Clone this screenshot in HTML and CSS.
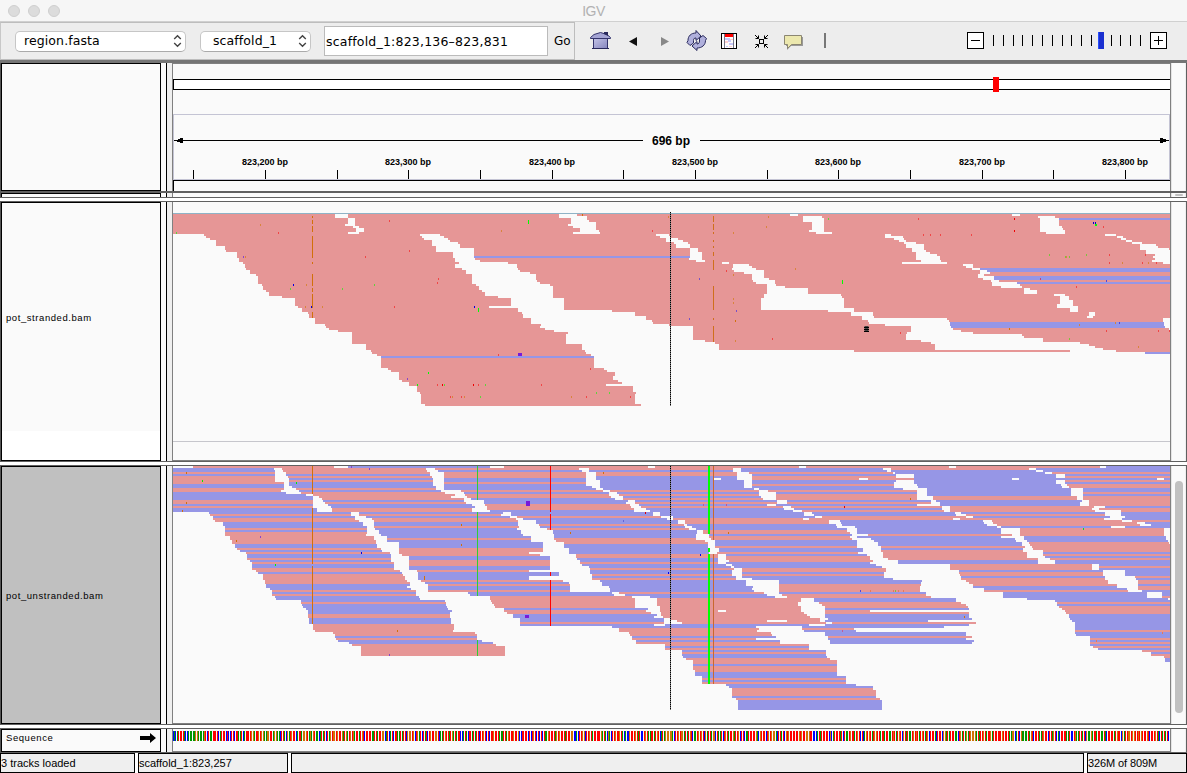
FILE: index.html
```html
<!DOCTYPE html>
<html lang="en">
<head>
<meta charset="utf-8">
<title>IGV</title>
<link rel="stylesheet" href="styles.css">
</head>
<body>
<div class="window">
  <header class="titlebar">
    <div class="lights"><i></i><i></i><i></i></div>
    <span class="title">IGV</span>
  </header>

  <div class="toolbar">
    <div class="locus-group">
      <div class="combo genome"><span>region.fasta</span>
        <svg width="9" height="14" viewBox="0 0 9 14"><path d="M1.2 5 4.5 1.7 7.8 5M1.2 9 4.5 12.3 7.8 9" fill="none" stroke="#444" stroke-width="1.4"/></svg></div>
      <div class="combo chrom"><span>scaffold_1</span>
        <svg width="9" height="14" viewBox="0 0 9 14"><path d="M1.2 5 4.5 1.7 7.8 5M1.2 9 4.5 12.3 7.8 9" fill="none" stroke="#444" stroke-width="1.4"/></svg></div>
      <div class="locus">scaffold_1:823,136–823,831</div>
      <span class="go">Go</span>
    </div>
    <svg class="tools" width="250" height="38" viewBox="575 22 250 38">
      <defs>
        <linearGradient id="lav" x1="0" y1="0" x2="1" y2="1"><stop offset="0" stop-color="#c4c4e8"/><stop offset="1" stop-color="#8585bd"/></linearGradient>
      </defs>
      <path d="M593.5 38.5h14v10h-14z" fill="url(#lav)" stroke="#33336b"/>
      <path d="M592 48.500h17" stroke="#29295c"/>
      <path d="M590.500 37.500 594 34.500 600.500 32.500 607 34.500 610.500 37.500v1h-20z" fill="#a4a4d4" stroke="#33336b"/>
      <path d="M604 32h4v4l-4-2z" fill="#29295c"/>
      <path d="M629 41.500l8-4.500v9z" fill="#111"/>
      <path d="M669 41.500l-8-4.500v9z" fill="#888"/>
      <g fill="#b0b0dc" stroke="#29295c" stroke-width="1" stroke-linejoin="round">
        <path d="M687 42.500 690 45.500 693.500 43v-2.500c0-2 1-2.500 2.500-2.500v2.500L701 36l-5-5.500v2.500c-5 0-8 3-8 7.500z"/>
        <path d="M706.500 38.500 703 35.500 699.500 38v3c0 2-1 3-2.500 3v-2.500L692 46l5 4.500V48c5 0 8.500-3 8.500-7.500z"/>
      </g>
      <rect x="721.500" y="33.500" width="15" height="15" fill="#fff" stroke="#000"/>
      <path d="M724.500 34v14M733.500 34v14" stroke="#778"/>
      <path d="M725 34h8v3h-8z" fill="#f00"/>
      <path d="M725 38h5v2h-5zM729 43h4v2h-4zM726 46h2v1h-2zM728 40h3v2h-3z" fill="#c9c9fa"/>
      <path d="M730 39h3v1h-3zM725 41h3v2h-3zM729 46h3v1h-3z" fill="#ffd0d0"/>
      <g fill="none" stroke="#000">
        <rect x="759.500" y="39.500" width="4" height="4"/>
        <path d="M755 35l3.500 3.500M755.500 38.500h3v-3M768 35l-3.500 3.500M764.500 35.500v3h3M755 48l3.500-3.500M758.500 47.500v-3h-3M768 48l-3.500-3.500M764.500 47.500v-3h3"/>
      </g>
      <path d="M786 37h17v9h-12l-4 4v-4h-1z" fill="#999"/>
      <path d="M784.500 35.500h17v9h-10l-4 4v-4h-3z" fill="#ece8ae" stroke="#8b8672"/>
      <path d="M825 33v15" stroke="#777" stroke-width="2"/>
    </svg>
    <svg class="zoomer" width="220" height="38" viewBox="960 22 220 38" shape-rendering="crispEdges">
      <rect x="967.500" y="32.500" width="16" height="16" fill="#fff" stroke="#000"/>
      <path d="M971 40.500h9" stroke="#000"/>
      <g id="zoom-ticks"></g>
      <rect x="1098" y="32" width="6" height="17" fill="#1a2fd0"/><path d="M1098.500 32v17" stroke="#2a50ff"/>
      <rect x="1150.500" y="32.500" width="16" height="16" fill="#fff" stroke="#000"/>
      <path d="M1154 40.500h9M1158.500 36v9" stroke="#000"/>
    </svg>
  </div>

  <section class="row header-row">
    <div class="name"></div><div class="split"></div>
    <div class="data">
      <svg width="997" height="127" viewBox="173 64 997 127">
        <g shape-rendering="crispEdges">
          <rect x="173.500" y="79.500" width="1000" height="10" fill="#fff" stroke="#000"/>
          <rect x="993" y="77" width="6" height="15" fill="#f00"/>
          <path d="M173.500 180v-65.500h996V179.500h-996" fill="none" stroke="#c4c4d4"/>
          <path d="M174 140.500h469M700 140.500h469M173.500 191v-10.500h998" fill="none" stroke="#000"/>
          <path d="M176 140h2v-1h2v-1h3v5h-3v-1h-3v-1h-1zM1168 140h-2v-1h-3v-1h-3v5h3v-1h3v-1h2z"/>
          <path id="ruler-ticks" stroke="#000"/>
        </g>
        <text class="span" x="671" y="145" text-anchor="middle">696 bp</text>
        <g id="ruler-labels" class="ruler" text-anchor="middle"></g>
      </svg>
    </div>
    <div class="scroll"></div>
  </section>
  <section class="row thin-row">
    <div class="name"></div><div class="split"></div><div class="data"></div>
    <div class="scroll"><b class="nub"></b></div>
  </section>
  <section class="row track-row">
    <div class="name stranded"><span>pot_stranded.bam</span></div><div class="split"></div>
    <div class="data">
      <svg id="stranded" width="997" height="258" viewBox="9 -9 2991 774" shape-rendering="crispEdges"></svg>
    </div>
    <div class="scroll"></div>
  </section>
  <section class="row track-row">
    <div class="name unstranded"><span>pot_unstranded.bam</span></div><div class="split"></div>
    <div class="data">
      <svg id="unstranded" width="997" height="258" viewBox="9 18 2991 774" shape-rendering="crispEdges"></svg>
    </div>
    <div class="scroll"><b class="thumb"></b></div>
  </section>
  <section class="row seq-row">
    <div class="name"><span>Sequence</span>
      <svg width="16" height="10" viewBox="0 0 16 10"><path d="M0 3h10V0l6 5-6 5V7H0z"/></svg></div>
    <div class="split"></div>
    <div class="data"><svg id="sequence" width="997" height="23" viewBox="0 0 997 23" shape-rendering="crispEdges"></svg></div>
    <div class="scroll"></div>
  </section>

  <footer class="status">
    <div class="tracks">3 tracks loaded</div>
    <div class="position">scaffold_1:823,257</div>
    <div class="message"></div>
    <div class="memory">326M of 809M</div>
  </footer>
</div>
<script src="plot.js"></script>
</body>
</html>
```
FILE: styles.css
```css
* { box-sizing: border-box; }
body { margin: 0; background: #fff; color: #000; font-family: "Liberation Sans", Arial, sans-serif; }
svg { display: block; flex: none; }
.window { width: 1187px; height: 773px; display: flex; flex-direction: column; overflow: hidden; }

.titlebar { height: 22px; flex: none; display: grid; grid-template-columns: 1fr auto 1fr; align-items: center; background: #f6f6f6; border-bottom: 1px solid #d0d0d0; }
.lights { display: flex; gap: 8px; padding-left: 8px; }
.lights i { width: 12px; height: 12px; border-radius: 50%; background: #dcdcdc; border: 1px solid #cfcfcf; }
.title { font-size: 14px; letter-spacing: -.5px; color: #b2b2b2; padding-top: 1px; }

.toolbar { height: 41px; flex: none; display: flex; background: #ededed; border-bottom: 3px solid #757575; }
.locus-group { width: 575px; height: 38px; display: flex; align-items: center; border: 1px solid #bdbdbd; border-left-color: #c8c8c8; padding-left: 14px; font: 12.500px "DejaVu Sans", sans-serif; }
.combo { height: 21px; display: flex; align-items: center; justify-content: space-between; background: #fff; border: 1px solid #c6c6c6; border-bottom-color: #aaa; border-radius: 5px; padding-right: 3px; }
.combo span { line-height: 19px; padding-bottom: 1px; letter-spacing: .1px; }
.genome { width: 171px; padding-left: 8px; }
.chrom { width: 111px; margin-left: 14px; padding-left: 12px; }
.locus { width: 224px; height: 30px; margin-left: 13px; background: #fff; border: 1px solid #bbb; padding-left: 1px; line-height: 29px; font-size: 12.500px; letter-spacing: .2px; white-space: nowrap; }
.go { margin-left: 6px; font-size: 12px; }
.tools { overflow: visible; }
.zoomer { margin-left: 135px; }

.row { flex: none; display: grid; grid-template-columns: 160px 11px 999px 15px; border-left: 1px solid #555; border-right: 1px solid #606060; background: #fafafa; }
.name { border: 1px solid #000; display: flex; align-items: center; font-size: 9.500px; letter-spacing: .57px; overflow: hidden; background: #fafafa; }
.name span { padding-left: 4px; }
.split { background: linear-gradient(to right, #fafafa 5px, #000 5px 6px, #efefef 6px); }
.data { border-left: 1px solid #808080; border-right: 1px solid #808080; overflow: hidden; background: #fafafa; }
.scroll { background: #fafafa; border-left: 1px solid #e4e4e4; border-right: 1px solid #eee; display: flex; justify-content: center; overflow: hidden; }
.header-row { height: 128px; }
.header-row .data { border-top: 1px solid #808080; }
.thin-row { height: 7px; border-top: 2px solid #606060; border-bottom: 1px solid #606060; }
.thin-row .name { border-bottom: 0; }
.nub { width: 8px; height: 2px; margin-top: 1px; background: #c0c0c0; border-radius: 1px; }
.track-row { height: 261px; margin-top: 3px; border-top: 1px solid #606060; border-bottom: 1px solid #606060; }
.track-row + .track-row { height: 260px; }
.track-row .data { border-bottom: 1px solid #808080; }
.stranded { background: linear-gradient(#fafafa 228px, #fff 228px); }
.stranded span { padding-bottom: 28px; }
.unstranded { background: #c0c0c0; }
.thumb { width: 8px; height: 232px; margin-top: 15px; border-radius: 4px; background: #c1c1c1; }
.seq-row { height: 25px; margin-top: 3px; border-top: 1px solid #606060; border-bottom: 1px solid #606060; }
.seq-row .name { justify-content: space-between; padding: 0 4px 6px 0; }
.seq-row .data { border-bottom: 1px solid #808080; }

.ruler { font-size: 9px; font-weight: bold; }
.span { font-size: 12px; font-weight: bold; }

.status { flex: 1; display: flex; gap: 3px; background: #fff; font-size: 11px; }
.status div { background: #efefef; border: 1px solid #000; line-height: 18px; white-space: nowrap; }
.tracks { width: 135px; border-left-color: #444; }
.position { width: 150px; }
.message { width: 793px; }
.memory { width: 100px; letter-spacing: -.1px; }
```
FILE: plot.js
```javascript
// Both alignment panels are drawn in units of a third of a pixel.
// Coordinate strings hold values relative to one of three windows, a, b and c.
const ORIGIN = { a: 0, b: 990, c: 2010 };
const RED = '#e69696', BLUE = '#9696e6', BLANK = '#fafafa';
const rect = (x, y, w, h, fill) => `<rect x="${x}" y="${y}" width="${w}" height="${h}" fill="${fill}"/>`;

// "y x1 x2 ... yEnd": stacked blank runs, each lasting until the next y.
function gaps(win, text) {
  const n = text.split(/[ ,;]+/).filter(Boolean).map(Number), o = ORIGIN[win];
  let out = '';
  for (let i = 0; i + 3 < n.length; i += 3)
    out += rect(n[i + 1] + o, n[i], n[i + 2] - n[i + 1], n[i + 3] - n[i], BLANK);
  return out;
}
// "x y ...": single base mismatches.
function marks(win, fill, text, w = 3, h = 6) {
  const n = text.split(/[ ,]+/).map(Number);
  let out = '';
  for (let i = 0; i < n.length; i += 2) out += rect(n[i] + ORIGIN[win], n[i + 1], w, h, fill);
  return out;
}
const column = (win, x, w, fill, spans) => spans.map(([p, q]) => rect(x + ORIGIN[win], p, w, q - p, fill)).join('');
function centre(top, bottom) {
  let out = '';
  for (let y = top; y < bottom; y += 6) out += rect(1500, y, 3, 3, '#000') + rect(1500, y + 3, 3, 3, '#777');
  return out;
}
// "y x y x ..." with a/b/c switching window.
function edge(text) {
  let o = 0; const pts = []; let y = null;
  for (const t of text.split(/[ ,]+/)) {
    if (ORIGIN[t] !== undefined) o = ORIGIN[t];
    else if (y === null) y = +t;
    else { pts.push([y, +t + o]); y = null; }
  }
  return y0 => { let x = pts[0][1]; for (const p of pts) { if (p[0] <= y0) x = p[1]; else break; } return x; };
}
function stack(left, right, colours) {
  const l = edge(left), r = edge(right);
  let y = 24, out = '';
  for (const m of colours.matchAll(/([RB])(\d+)/g))
    for (let i = 0; i < +m[2]; i++, y += 6)
      if (r(y) > l(y)) out += rect(l(y), y, r(y) - l(y), 6, m[1] === 'R' ? RED : BLUE);
  return out;
}

// pot_stranded.bam
const lowerLeft = '87 102 93 108 99 120 105 138 123 165 135 168 141 201 159 207 171 219 177 225 189 228 195 240 207 258 213 264 237 276 243 279 255 288 261 297 273 336 279 375 303 384 309 396 321 414 327 417 339 435 357 465 363 468 369 477 375 504 381 546 417 588 435 603 441 606 447 621 453 633 489 654 495 663 501 687 525 696 531 717 543 741 561 750 567 753 597 765 603';
const steps = lowerLeft.split(' ').map(Number);
let a = rect(9, 24, 2991, 3, '#8fb3c6') + rect(9, 27, 2991, 576, RED);
for (let i = 0; i + 2 < steps.length; i += 2) a += rect(9, steps[i], steps[i + 1] - 9, steps[i + 2] - steps[i], BLANK);
a += gaps('a', '27 495 534;39 534 555;57 525 555;63 549 567;69 558 582;81 534 567;87');
a += gaps('a', '87 750 810;93 756 822;99 762 834;105 786 840;111 786 864;117 786 870;123 798 870;129 798 912;141 849 912;159 855 915;165 855 930;171 867 1014;177 855 1041;189 876 1044;195 888 1050;201 888 1080;207 906 1098;225 906 1101;231 906 1110;237 918 1140;243 927 1149;255 936 1149;261 945 1149;273 984 1149;279 1023 1182;303 957 1182;309');
a += gaps('b', '309 54 192;315 54 336;321 66 405;327 69 405;333 69 438;339 93 438;345 93 456;351 93 459;357 123 507;363 120 579;369 135 579;375 162 579;381 204 579;387 198 579;405 198 615;411 198 645;417 246 657;435 255 1062;441 258 2010;447 273 2010;453 282 2010;489 312 2010;495 321 2010;501 345 2010;513 339 2010;525 354 2010;531 366 2010;537 318 2010;543 399 2010;561 408 2010;567 405 2010;597 423 2010;603');
a += gaps('b', '27 177 231;33 177 261;39 213 261;45 213 267;51 213 288;57 204 288;63 219 288;69 240 288;75 240 297;81 219 300;87');
a += gaps('b', '87 468 507;93 480 510;99 498 534;105 498 549;111 522 564;117 528 570;129 570 594;141 570 606;159 567 606;165 588 615;171 666 687;177 699 747;183 699 756;189 696 768;195 702 792;201 732 792;207 756 792;219 756 807;225 759 825;231 768 825;237 801 828;243 801 855;249 801 924;267 792 1023;273 792 1026;279 783 1032;309 783 1062;315 984 1062;321');
a += gaps('b', '27 870 894;33 909 966;39 909 972;51 936 972;75 927 972;81 948 996;87');
a += gaps('c', '321 33 99;333 66 102;339 66 321;345 84 327;351 87 330;357 135 333;363 213 333;369 213 339;375 213 363;381 201 399;387 198 546;393 198 552;399 198 609;405 243 609;411 273 720;417 285 747;423 285 765;429 285 789;435 690 828;441');
a += gaps('c', '27 516 540;33 594 645;39 600 657;63 600 666;69 600 669;75 600 675;81 618 675;87 135 153;93 135 189;99 162 192;105 177 198;111 192 228;117 198 252;129 216 252;135 216 258;141 228 270;147 228 291;153 228 300;165 243 303;171 186 321;177 369 399;183 378 399;189 396 420;195 420 450;207 414 432;213 414 462;219 429 462;225 453 477;231 456 531;237 456 540;243 483 546;249 552 570;255 552 591;267 642 675;273 660 687;285 660 699;297 651 699;303 651 714;309 690 714;321 747 765;333 741 759;339');
a += gaps('c', '87 795 828;93 831 849;99 843 858;105 858 876;111 876 906;117 900 948;123 900 954;129 900 987;135 918 990;147 945 990;153 939 990;159 945 990;165 936 990;171 969 990;177');
a += gaps('c', '339 969 990;351 972 990;363 975 990;369 987 990;375');
a += rect(912, 153, 648, 6, BLUE) + rect(633, 453, 639, 6, BLUE);
for (const [x, y, w, h] of [[657, 39, 333, 6], [420, 189, 570, 6], [441, 195, 549, 6], [462, 213, 528, 12], [531, 231, 459, 6], [330, 351, 642, 12], [333, 363, 642, 6], [915, 441, 75, 6]]) a += rect(x + 2010, y, w, h, BLUE);
a += column('a', 426, 3, '#d1700a', [[33, 39], [45, 57], [63, 81], [93, 159], [171, 177], [207, 243], [249, 261], [267, 309], [321, 339]]);
a += column('b', 639, 3, '#cf6f1c', [[33, 51], [57, 75], [81, 87], [105, 111], [123, 129], [141, 153], [165, 195], [243, 315], [339, 345], [363, 411]]);
a += marks('a', '#d8843c', '270 57 225 153 408 237 456 303 993 75 846 573 882 573 405 303');
a += marks('a', '#f04646', '324 81 657 45 717 135 585 153 804 219 801 231 672 303 984 447 801 537 924 537 840 573 873 573');
a += marks('a', '#e00', '816 537 909 537') + marks('a', '#00d', '369 237 423 303 912 303') + marks('a', '#8a46c8', '219 153 711 519');
a += marks('a', '#5fd23c', '18 81 360 249 516 249 612 237 822 537 945 537 930 573') + marks('a', '#0f0', '774 501 741 537') + marks('a', '#0f0', '924 309', 3, 12);
a += marks('b', '#d8843c', '3 75 504 33 699 81 804 33 798 63 699 207 885 189 699 279 699 291 705 405 213 573') + marks('b', '#d1700a', '246 27 705 345');
a += marks('b', '#f04646', '456 75 678 195 816 399 270 489 123 537 258 573 390 573') + marks('b', '#7850c8', '597 219 708 315 567 339');
a += marks('b', '#5fd23c', '984 39 288 561 327 561') + marks('b', '#0f0', '84 45 1026 225', 3, 12) + marks('b', '#7a1ad8', '54 444', 12, 9);
a += marks('c', '#f04646', '234 39 249 87 270 87 300 87 393 87 789 63 807 147 807 171 915 147 906 171 948 171 708 243 180 381 798 375 954 375 987 375') + marks('c', '#e00', '522 39 522 75');
a += marks('c', '#7cc23c', '627 147 675 153 687 153 738 147 687 399') + marks('c', '#d8843c', '678 153 846 171 924 171 825 351 894 423 717 357') + marks('c', '#d1700a', '507 369');
a += marks('c', '#00c', '759 51 765 51') + marks('c', '#0f0', '765 57', 6) + marks('c', '#5046dc', '798 225 837 351') + marks('c', '#c04678', '600 219');
a += rect(2082, 363, 15, 18, '#966') + rect(2085, 363, 9, 18, '#444') + rect(2082, 366, 15, 3, '#000') + rect(2082, 372, 15, 3, '#000') + rect(2082, 378, 15, 3, '#000');
a += rect(9, 708, 2991, 3, '#c6c6cc') + centre(21, 603);
document.getElementById('stranded').innerHTML = a;

// pot_unstranded.bam
let u = '';
for (const [p, q, c] of [[69, 492, RED], [534, 960, BLUE], [1002, 1434, RED], [1455, 1887, RED], [1908, 2337, RED], [2358, 2790, RED], [2808, 3000, BLUE]]) u += rect(p, 18, q - p, 6, c);
u += stack('24 9 156 117 162 120 168 129 180 135 186 159 198 165 228 180 240 186 252 195 264 201 270 210 276 228 282 231 300 240 306 246 330 258 336 264 342 279 360 285 372 288 384 300 390 306 408 315 414 318 420 393 432 396 438 399 444 408 450 414 474 417 492 429 510 435 516 489 522 495 534 498 540 504 546 537 552 546 558 573',
  '24 312 30 315 66 342 90 333 96 348 102 408 108 429 144 441 156 543 168 555 180 567 186 579 198 591 222 588 228 612 240 618 252 621 264 633 270 636 276 660 282 663 306 672 330 690 336 696 342 699 348 705 360 711 366 720 378 711 384 723 390 738 408 747 414 750 420 825 426 828 438 831 444 834 450 846 456 840 474 843 492 852 510 849 516 915 522 921 540 936 546 969 552 978 558 1005',
  'B2R1B1R4B2R2B4R2B1R1B3R1B1R2B3R1B1R6B2R1B1R1B2R1B1R1B2R2B1R5B3R1B1R1B3R1B5R2B3R6B1R1B2R6');
u += stack('24 336 30 339 36 348 48 354 54 357 78 366 84 378 90 387 96 393 102 429 108 447 114 456 120 459 126 465 132 474 138 483 144 486 156 567 168 588 174 606 180 612 204 615 210 627 222 633 228 651 246 687 282 696 288 717 330 741 336 744 360 753 366 765 372 774 396 894 402 900 408 960 420 963 426 966 432 972 438 975 444 1002 456 1011 462 1029 474 1050',
  '24 768 30 771 36 780 48 786 54 789 78 798 90 813 96 825 102 855 108 843 114 882 126 888 132 906 138 915 144 906 156 999 162 993 b 168 30 174 48 180 54 198 57 204 51 210 63 222 69 228 93 246 129 276 87 282 120 288 150 330 87 336 177 348 87 360 189 366 207 372 210 396 336 402 342 408 396 414 405 444 444 450 438 456 453 462 471 468 462 474 492 492 462',
  'R3B1R1B1R1B3R1B1R4B1R1B2R2B1R1B1R2B2R1B5R1B4R4B2R3B2R1B4R1B1R1B2R1B2R6B1R2B4R1B1');
u += stack('24 795 30 804 36 822 90 873 96 882 102 885 108 891 114 903 120 942 132 945 138 951 150 960 156 1023 168 1041 b 174 69 180 108 192 117 198 120 204 141 210 159 222 162 240 168 246 192 264 207 282 228 294 231 300 240 312 246 318 267 324 270 342 276 360 300 366 306 378 327 384 330 396 357 402 375 408 450 414 471 438 480 456 483 468 489 474 513 480 531 486 546 492 495 498 336 504 357 516 387 522 390 528 396 540 408 552 495 570 546 588 549 594 558 600 579 630 585 648 606 672 678 678 687 684 696 714 708 720 714',
  'b 24 237 30 246 36 258 78 276 84 288 90 309 96 327 108 333 114 345 120 384 126 378 132 390 138 393 144 402 156 459 168 483 174 501 180 534 192 552 198 555 204 567 210 591 222 588 240 615 246 624 276 627 282 654 312 678 318 693 324 702 330 696 348 708 360 738 378 759 384 756 390 762 396 792 402 801 408 825 414 903 426 894 438 903 456 912 462 921 468 930 474 960 486 978 492 927 498 768 504 777 510 771 516 813 522 816 528 828 534 768 540 840 552 927 570 978 588 981 594 990 600 1011 648 1038 672 1068 678 1119 690 1128 714 1140 720 1146',
  'R1B1R3B2R1B3R1B1R2B3R3B3R1B3R1B1R1B4R3B5R2B2R1B2R1B2R1B1R1B6R1B2R13B2R4B1R1B1R2B1R1B1R1B2R3B1R3B3R1B1R1B2R4B1R1B5');
u += stack('b 24 267 36 288 60 300 84 309 90 330 96 351 102 357 108 369 120 405 132 417 138 423 144 438 150 450 156 480 168 519 180 555 192 561 198 576 204 588 210 609 222 627 234 633 240 645 264 657 276 651 282 678 300 687 306 678 312 696 318 702 324 726 354 756 360 837 402 846 408 861 414 942 426 957 432 966 438 975 474 984 480 975 486 996 492 975 498 906 510 912 516 975 528 984 540 990',
  'b 24 699 36 711 60 732 84 762 90 777 108 783 114 789 120 831 132 801 138 849 144 852 150 879 156 912 168 945 174 909 180 987 192 1008 198 1011 c 204 21 210 21 216 30 222 36 228 30 234 36 240 51 264 69 276 54 282 81 288 90 300 99 306 90 312 108 318 126 324 138 336 132 354 159 360 246 366 243 378 240 396 258 408 273 414 348 426 363 432 378 438 384 444 387 450 90 456 387 474 396 480 264 486 408 492 387 498 312 504 42 510 48 516 378 528 396 534 378 540 402 546 396',
  'R1B1R2B7R1B1R1B1R1B1R1B1R1B5R3B3R2B1R2B3R1B2R1B1R3B3R2B1R1B4R4B1R2B2R3B1R2B4R1B2R1B3R1B3');
u += stack('b 24 723 36 747 42 756 84 777 90 804 96 828 120 861 132 828 138 873 144 882 150 906 156 936 162 942 168 966 174 927 180 1020 186 1023 192 1026 c 198 45 204 51 222 84 228 51 234 93 240 102 246 114 258 123 276 129 294 144 300 174 312 330 330 357 342 360 348 363 360 378 366 387 372 399 384 432 396 489 414 561 420 645 426 651 438 657 444 666 450 675 456 678 462 687 474 690 480 696 486 705 522 708 528 750 558 759 564 774 570 906 576 933 588 972 594 975',
  'c 24 129 30 141 36 159 42 168 54 222 60 168 66 162 84 189 90 231 120 273 132 231 138 306 150 312 156 345 162 348 168 378 174 339 180 429 186 432 192 441 198 471 204 483 222 516 228 483 234 525 240 528 246 546 258 555 264 549 276 561 294 594 312 756 330 789 348 795 360 804 372 831 384 861 390 864 396 921 414 984 420 990',
  'B2R1B1R2B2R1B2R1B1R3B1R1B1R1B1R1B2R2B7R1B5R1B1R5B2R3B1R2B1R4B2R1B5R1B1R4B8R1B3R1B1R1B1R1B1R1B1R2B2');
u += stack('c 24 153 36 165 42 222 72 231 78 234 84 261 108 279 120 288 126 300 138 330 156 363 162 378 168 399 174 360 180 456 186 459 192 471 198 483 204 540 228 552 240 561 246 567 252 570 258 576 264 579 270 609 288 615 294 630 300 645 312 777 330 855 348 885 354 888 360 894 390 906 396 966 414 990',
  'c 24 567 30 588 36 615 42 648 54 675 60 648 72 663 78 666 84 693 108 711 120 726 126 720 138 762 144 756 150 765 156 795 168 810 174 792 180 846 186 891 192 900 198 813 204 972 228 978 240 984 246 987 252 990',
  'R1B13R2B3R3B1R1B1R4B1R4B3R5B1R1B1R1B3R1B4R1B1R2B1R2B1B2R1');
u += stack('c 24 588 30 609 36 636 42 675 72 681 78 687 84 729 120 747 138 795 144 777 150 843 168 855 174 846 180 876 186 915 192 933 198 855 204 990', 'c 24 990', 'B2R1B1R1B1R1B1R2B2R1B1R5B1R2B4R1B3');
for (const [x, y, w] of [[1632, 54, 21], [2067, 54, 27], [2526, 54, 21], [2961, 54, 21], [1644, 450, 24], [1791, 480, 60]]) u += rect(x, y, w, 6, BLANK);
u += column('a', 426, 3, '#d1700a', [[18, 102], [144, 312], [318, 492]]);
u += column('a', 921, 3, '#32cd32', [[18, 120], [156, 408], [540, 588]]);
u += column('b', 150, 3, '#f00', [[18, 156], [162, 210], [336, 348], [360, 498]]);
u += column('b', 624, 6, '#0f0', [[18, 222], [264, 276], [282, 672]]);
u += column('b', 639, 3, '#c8682e', [[18, 240], [282, 672]]);
u += marks('a', '#d1700a', '48 36 48 126 36 150 198 240 681 510 873 192 873 252') + marks('a', '#0e0', '96 60 378 66 315 312') + marks('a', '#8c46c8', '270 228 657 582 597 24 543 18') + marks('a', '#00d', '573 276') + marks('a', '#d1700a', '762 348', 3, 12);
u += marks('b', '#d1700a', '309 36 210 216 684 216') + marks('b', '#d00', '435 156 1032 138') + marks('b', '#00e', '600 282 504 336') + marks('b', '#6464d8', '369 180') + marks('b', '#7a1ad8', '78 123', 12, 15) + marks('b', '#7a1ad8', '75 465', 12, 9) + marks('b', '#c25a96', '678 132 609 132 1026 510');
u += marks('c', '#d1700a', '210 114 372 468') + marks('c', '#0d3', '729 204') + marks('c', '#e8785a', '90 390 159 390 174 390 189 390 966 516 768 540') + marks('c', '#5046dc', '60 390') + marks('c', '#7cc23c', '165 390');
u += centre(18, 750);
document.getElementById('unstranded').innerHTML = u;

// Ruler, zoom slider and base colours.
let d = '', labels = '';
[193, 265, 337, 408, 480, 552, 623, 695, 767, 838, 910, 982, 1053, 1125].forEach((x, i) => {
  d += `M${x + 0.5} 170v9`;
  if (i % 2) labels += `<text x="${x}" y="165">823,${200 + 50 * (i - 1)} bp</text>`;
});
document.getElementById('ruler-ticks').setAttribute('d', d);
document.getElementById('ruler-labels').innerHTML = labels;
let t = '';
for (let i = 0; i < 16; i++) t += rect(Math.round(993 + i * 9.8), 35, 1, 11, '#000');
document.getElementById('zoom-ticks').innerHTML = t;

const bases = { A: '#009600', C: '#0000ff', G: '#d17105', T: '#ff0000' };
const opening = 'CACATTTTACCAAAAAGGAAAAGTCTAATTTTCATTTCTCCTTCTTAATCATTTTGGATTGTGGAAGGTTAGGAACTTACGATGTT';
let seed = 7, s = '';
for (let i = 0; i < 696; i++) {
  seed = (seed * 1103515245 + 12345) % 2147483648;
  const b = opening[i] || 'ATGATCTTTAGCTG'[Math.floor(seed / 65536) % 14];
  s += rect(Math.floor(i * 1.4325), 2, 1, 10, bases[b]);
}
document.getElementById('sequence').innerHTML = s;
```
